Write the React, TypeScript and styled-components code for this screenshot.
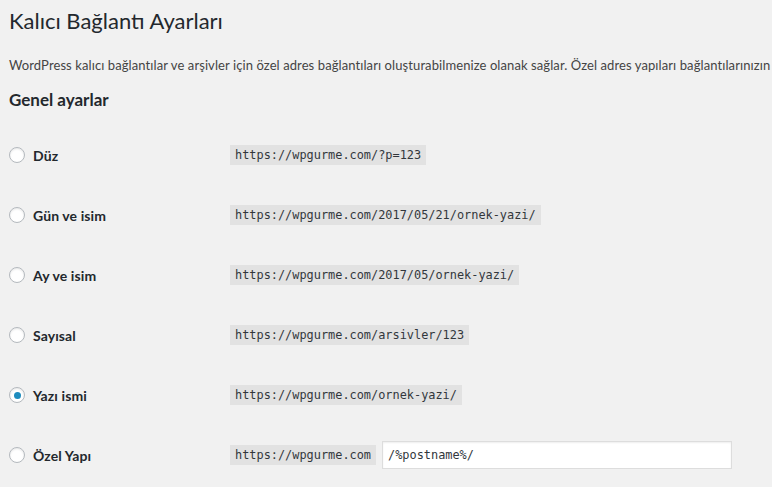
import React from "react";
import styled, { createGlobalStyle } from "styled-components";

const Global = createGlobalStyle`
  html, body { margin: 0; padding: 0; background: #f1f1f1; }
  body { font-family: Lato, "Open Sans", sans-serif; color: #444; overflow: hidden; }
`;

const Wrap = styled.div`
  padding: 0 0 0 9px;
  width: 763px;
  height: 487px;
  overflow: hidden;
`;

const Title = styled.h1`
  margin: 0;
  padding: 6px 0 0 0;
  height: 34px;
  font-size: 22px;
  font-weight: 400;
  line-height: 29px;
  color: #23282d;
  white-space: nowrap;
`;

const Desc = styled.p`
  margin: 0;
  padding-top: 16px;
  height: 29px;
  font-size: 13px;
  letter-spacing: 0.09px;
  line-height: 18px;
  color: #444;
  white-space: nowrap;
`;

const Heading = styled.h2`
  margin: 0;
  padding-top: 3px;
  height: 37px;
  font-size: 17px;
  font-weight: 700;
  line-height: 24px;
  color: #23282d;
`;

const Row = styled.div`
  display: flex;
  align-items: center;
  height: 60px;
`;

const LabelCell = styled.label`
  display: flex;
  align-items: center;
  gap: 8px;
  width: 221px;
  flex: none;
  font-size: 14px;
  font-weight: 700;
  letter-spacing: 0.1px;
  color: #23282d;
`;

const Radio = styled.span<{ $checked?: boolean }>`
  box-sizing: border-box;
  width: 16px;
  height: 16px;
  border-radius: 50%;
  border: 1px solid #b4b9be;
  background: #fff;
  box-shadow: inset 0 1px 2px rgba(0, 0, 0, 0.1);
  display: flex;
  align-items: center;
  justify-content: center;
  &::after {
    content: "";
    display: ${(p) => (p.$checked ? "block" : "none")};
    width: 7px;
    height: 7px;
    border-radius: 50%;
    background: #1e8cbe;
  }
`;

const Code = styled.code`
  display: inline-block;
  padding: 0 5px;
  height: 20px;
  line-height: 20px;
  background: #e2e2e2;
  font-family: "DejaVu Sans Mono", "Liberation Mono", monospace;
  font-size: 11.9px;
  color: #32373c;
  white-space: nowrap;
`;

const Custom = styled.div`
  display: flex;
  align-items: center;
  gap: 6px;
`;

const Input = styled.input`
  box-sizing: border-box;
  width: 350px;
  height: 28px;
  margin: 0;
  padding: 0 5px;
  border: 1px solid #ddd;
  box-shadow: inset 0 1px 2px rgba(0, 0, 0, 0.07);
  background: #fff;
  font-family: "DejaVu Sans Mono", "Liberation Mono", monospace;
  font-size: 11.9px;
  color: #32373c;
  outline: none;
`;

const options = [
  { label: "Düz", url: "https://wpgurme.com/?p=123" },
  { label: "Gün ve isim", url: "https://wpgurme.com/2017/05/21/ornek-yazi/" },
  { label: "Ay ve isim", url: "https://wpgurme.com/2017/05/ornek-yazi/" },
  { label: "Sayısal", url: "https://wpgurme.com/arsivler/123" },
  { label: "Yazı ismi", url: "https://wpgurme.com/ornek-yazi/", checked: true },
];

export default function App() {
  return (
    <>
      <Global />
      <Wrap>
        <Title>Kalıcı Bağlantı Ayarları</Title>
        <Desc>
          WordPress kalıcı bağlantılar ve arşivler için özel adres bağlantıları oluşturabilmenize olanak sağlar. Özel adres yapıları bağlantılarınızın
        </Desc>
        <Heading>Genel ayarlar</Heading>
        {options.map((o) => (
          <Row key={o.label}>
            <LabelCell>
              <Radio $checked={o.checked} />
              {o.label}
            </LabelCell>
            <Code>{o.url}</Code>
          </Row>
        ))}
        <Row>
          <LabelCell>
            <Radio />
            Özel Yapı
          </LabelCell>
          <Custom>
            <Code>https://wpgurme.com</Code>
            <Input defaultValue="/%postname%/" />
          </Custom>
        </Row>
      </Wrap>
    </>
  );
}
